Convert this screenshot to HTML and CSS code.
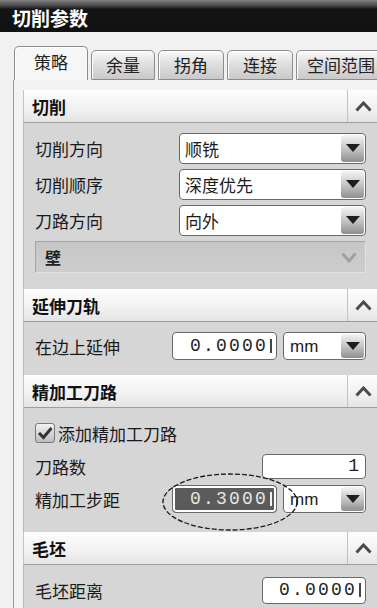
FILE: index.html
```html
<!DOCTYPE html>
<html lang="zh-CN">
<head>
    <meta charset="UTF-8">
    <meta name="viewport" content="width=device-width, initial-scale=1.0">
    <title>切削参数</title>
    <link rel="stylesheet" href="styles.css">
</head>
<body>
    <!-- Title Bar -->
    <div class="titlebar">切削参数</div>

    <div class="content">
        <!-- Tabs -->
        <div class="tabs">
            <div class="tab active" style="width: 74px">策略</div>
            <div class="tab" style="width: 64px">余量</div>
            <div class="tab" style="width: 66px">拐角</div>
            <div class="tab" style="width: 66px">连接</div>
            <div class="tab" style="width: 90px">空间范围</div>
        </div>

        <div class="panel">
            <!-- 切削 -->
            <div class="section">
                <div class="section-head">
                    <span class="section-title">切削</span>
                    <span class="toggle"><svg width="17" height="11" viewBox="0 0 17 11"><polyline points="1.5,9.5 8.5,2 15.5,9.5" fill="none" stroke="#4a4a4a" stroke-width="3"/></svg></span>
                </div>
                <div class="section-body body-cut">
                    <div class="row row-select">
                        <span class="label">切削方向</span>
                        <div class="select select-wide"><span class="select-text">顺铣</span><span class="select-btn"><i class="arrow"></i></span></div>
                    </div>
                    <div class="row row-select">
                        <span class="label">切削顺序</span>
                        <div class="select select-wide"><span class="select-text">深度优先</span><span class="select-btn"><i class="arrow"></i></span></div>
                    </div>
                    <div class="row row-select">
                        <span class="label">刀路方向</span>
                        <div class="select select-wide"><span class="select-text">向外</span><span class="select-btn"><i class="arrow"></i></span></div>
                    </div>
                    <div class="subhead">
                        <span class="subhead-title">壁</span>
                        <svg width="16" height="11" viewBox="0 0 16 11"><polyline points="1.5,1.5 8,9 14.5,1.5" fill="none" stroke="#a0a0a0" stroke-width="3"/></svg>
                    </div>
                </div>
            </div>

            <!-- 延伸刀轨 -->
            <div class="section">
                <div class="section-head">
                    <span class="section-title">延伸刀轨</span>
                    <span class="toggle"><svg width="17" height="11" viewBox="0 0 17 11"><polyline points="1.5,9.5 8.5,2 15.5,9.5" fill="none" stroke="#4a4a4a" stroke-width="3"/></svg></span>
                </div>
                <div class="section-body body-extend">
                    <div class="row row-field">
                        <span class="label">在边上延伸</span>
                        <div class="field field-mid"><span class="num">0.0000</span><i class="caret"></i></div>
                        <div class="select select-unit"><span class="select-text unit">mm</span><span class="select-btn"><i class="arrow"></i></span></div>
                    </div>
                </div>
            </div>

            <!-- 精加工刀路 -->
            <div class="section">
                <div class="section-head">
                    <span class="section-title">精加工刀路</span>
                    <span class="toggle"><svg width="17" height="11" viewBox="0 0 17 11"><polyline points="1.5,9.5 8.5,2 15.5,9.5" fill="none" stroke="#4a4a4a" stroke-width="3"/></svg></span>
                </div>
                <div class="section-body body-finish">
                    <div class="row row-check">
                        <span class="checkbox"><svg width="16" height="14" viewBox="0 0 16 14"><polyline points="2,7 6.5,11.5 14.5,2" fill="none" stroke="#333" stroke-width="3"/></svg></span>
                        <span class="label">添加精加工刀路</span>
                    </div>
                    <div class="row row-count">
                        <span class="label">刀路数</span>
                        <div class="field field-short"><span class="num">1</span></div>
                    </div>
                    <div class="row row-field">
                        <span class="label">精加工步距</span>
                        <div class="field field-mid selected"><span class="num">0.3000</span><i class="caret"></i></div>
                        <div class="select select-unit"><span class="select-text unit">mm</span><span class="select-btn"><i class="arrow"></i></span></div>
                    </div>
                </div>
            </div>

            <!-- 毛坯 -->
            <div class="section">
                <div class="section-head">
                    <span class="section-title">毛坯</span>
                    <span class="toggle"><svg width="17" height="11" viewBox="0 0 17 11"><polyline points="1.5,9.5 8.5,2 15.5,9.5" fill="none" stroke="#4a4a4a" stroke-width="3"/></svg></span>
                </div>
                <div class="section-body body-stock">
                    <div class="row row-field">
                        <span class="label">毛坯距离</span>
                        <div class="field field-short"><span class="num">0.0000</span><i class="caret"></i></div>
                    </div>
                </div>
            </div>
        </div>
    </div>

    <!-- Annotation ellipse -->
    <svg class="mark" width="140" height="62" viewBox="0 0 140 62">
        <ellipse cx="69" cy="30" rx="67" ry="28" fill="none" stroke="#1a1a1a" stroke-width="1.3" stroke-dasharray="5 2"/>
    </svg>
</body>
</html>
```

FILE: styles.css
```css
/* General Reset */
* {
    margin: 0;
    padding: 0;
    box-sizing: border-box;
}

body {
    width: 377px;
    height: 608px;
    overflow: hidden;
    position: relative;
    background-color: #f1f1f1;
    color: #1c1c1c;
    font-family: "Noto Sans CJK SC", sans-serif;
}

/* Title Bar */
.titlebar {
    height: 32px;
    padding-left: 12px;
    background: linear-gradient(#808080 0, #444 6px, #151515 9px, #111 100%);
    color: #fff;
    font-size: 19px;
    font-weight: bold;
    line-height: 36px;
}

.content {
    padding: 14px 0 0 13px;
    width: 400px;
}

/* Tabs */
.tabs {
    display: flex;
    align-items: flex-end;
    gap: 3px;
    height: 34px;
    margin-left: 1px;
}

.tab {
    flex: none;
    height: 30px;
    border: 1px solid #8c8c8c;
    border-radius: 5px 5px 0 0;
    background: linear-gradient(#fafafa, #e2e2e2 40%, #c9c9c9);
    box-shadow: inset 1px 1px 0 #fff;
    font-size: 17px;
    line-height: 27px;
    text-align: center;
    color: #222;
}

.tab.active {
    height: 34px;
    border-bottom: none;
    background: #f6f6f6;
    line-height: 30px;
}

/* Panel */
.panel {
    border-left: 1px solid #9a9a9a;
    background-color: #f3f3f3;
    padding: 10px 0 0 9px;
    height: 600px;
}

.section {
    width: 360px;
}

.section-head {
    display: flex;
    align-items: center;
    height: 33px;
    background: linear-gradient(#fdfdfd, #f1f1f1 60%, #e4e4e4);
    border-left: 1px solid #c4c4c4;
    border-bottom: 1px solid #9e9e9e;
}

.section-title {
    flex: 1;
    padding-left: 8px;
    font-size: 17px;
    font-weight: bold;
    color: #111;
}

.toggle {
    display: flex;
    align-items: center;
    width: 36px;
    height: 100%;
    padding-left: 7px;
    border-left: 1px solid #c2c2c2;
}

.section-body {
    display: flex;
    flex-direction: column;
    background-color: #d6d6d6;
    border-left: 1px solid #b8b8b8;
    padding: 9px 17px 0 11px;
}

.body-cut {
    gap: 4px;
    height: 166px;
}

.body-extend {
    height: 53px;
    padding-top: 10px;
}

.body-finish {
    gap: 6px;
    height: 124px;
    padding-top: 11px;
}

.body-stock {
    height: 60px;
    padding-top: 11px;
}

/* Rows */
.row {
    display: flex;
    align-items: center;
}

.row-select {
    height: 32px;
}

.row-field {
    height: 28px;
}

.row-check {
    height: 28px;
}

.row-count {
    height: 26px;
}

.label {
    flex: 1;
    font-size: 17px;
    color: #1a1a1a;
}

/* Dropdowns */
.select {
    display: flex;
    align-items: center;
    height: 31px;
    background-color: #fff;
    border: 1px solid #6a6a6a;
    border-radius: 4px;
    padding-right: 1px;
}

.select-wide {
    width: 187px;
}

.select-unit {
    width: 83px;
    height: 28px;
    margin-left: 6px;
}

.select-text {
    flex: 1;
    padding-left: 5px;
    font-size: 17px;
}

.select-text.unit {
    font-family: "Liberation Sans", sans-serif;
    padding-left: 6px;
    padding-top: 2px;
}

.select-btn {
    display: flex;
    align-items: center;
    justify-content: center;
    width: 23px;
    height: calc(100% - 2px);
    border-radius: 3px;
    background: linear-gradient(#f4f4f4, #c6c6c6 50%, #8f8f8f);
}

.arrow {
    width: 0;
    height: 0;
    border-left: 7px solid transparent;
    border-right: 7px solid transparent;
    border-top: 8px solid #1e1e1e;
}

/* Sub header (collapsed group) */
.subhead {
    display: flex;
    align-items: center;
    justify-content: space-between;
    height: 32px;
    margin-top: 1px;
    padding: 0 8px 0 9px;
    background: linear-gradient(#c6c6c6, #cdcdcd);
    border: 1px solid #a6a6a6;
    border-right-color: #e2e2e2;
    border-bottom-color: #e2e2e2;
}

.subhead-title {
    font-size: 16px;
    font-weight: bold;
    color: #222;
}

/* Number fields */
.field {
    display: flex;
    justify-content: flex-end;
    align-items: center;
    height: 28px;
    padding-right: 4px;
    background-color: #fff;
    border: 1px solid #6a6a6a;
    border-radius: 4px;
}

.field-mid {
    width: 105px;
}

.field-short {
    width: 104px;
    height: 27px;
}

.row-count .field-short {
    height: 25px;
    padding-right: 6px;
}

.num {
    white-space: nowrap;
    font-family: "Liberation Mono", monospace;
    font-size: 18px;
    letter-spacing: 2.2px;
    color: #222;
}

.row-count .num {
    letter-spacing: 0;
}

.caret {
    width: 2px;
    height: 14px;
    margin-left: 2px;
    background-color: #444;
}

.field.selected {
    box-shadow: inset 0 0 0 2px #fff;
    background-color: #5b5b5b;
}

.field.selected .num {
    color: #e6e6e6;
}

.field.selected .caret {
    background-color: #f2f2f2;
}

/* Checkbox */
.checkbox {
    display: flex;
    align-items: center;
    justify-content: center;
    width: 20px;
    height: 20px;
    margin-right: 3px;
    border: 1px solid #7a7a7a;
    border-radius: 3px;
    background: linear-gradient(#f2f2f2, #bdbdbd);
}

.row-check .label {
    flex: none;
}

/* Annotation ellipse */
.mark {
    position: absolute;
    left: 161px;
    top: 472px;
}
```
